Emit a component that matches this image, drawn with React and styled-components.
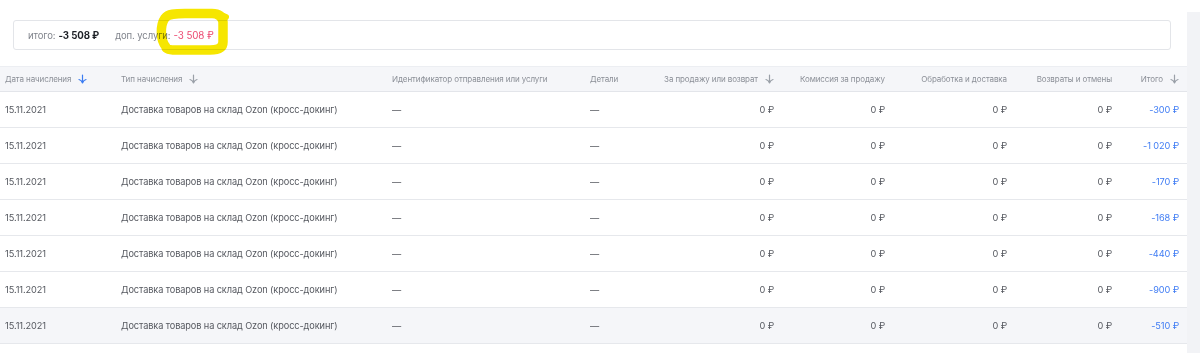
import React from "react";
import styled, { createGlobalStyle } from "styled-components";

const GlobalStyle = createGlobalStyle`
  html, body {
    margin: 0;
    padding: 0;
    background: #fff;
    font-family: Inter, "Noto Sans", sans-serif;
  }
`;

const Page = styled.div`
  display: flex;
  width: 1200px;
  height: 353px;
  overflow: hidden;
`;

const Main = styled.div`
  width: 1187px;
  flex: none;
  padding-top: 20px;
  position: relative;
`;

const Side = styled.div`
  flex: 1;
  margin-top: 12px;
  background: #f2f3f6;
`;

const Summary = styled.div`
  margin: 0 16px 0 13px;
  height: 30px;
  box-sizing: border-box;
  border: 1px solid #e3e5e9;
  border-radius: 3px;
  display: flex;
  align-items: center;
  gap: 16px;
  padding-left: 14px;
  font-size: 9.5px;
  letter-spacing: -0.1px;
`;

const SumItem = styled.span`
  color: #80848c;
  display: flex;
  gap: 3px;
  align-items: baseline;
`;

const SumValue = styled.span`
  font-size: ${({ $bold }) => ($bold ? "9.7px" : "9.8px")};
  font-weight: ${({ $bold }) => ($bold ? 700 : 400)};
  color: ${({ $tone }) => ($tone === "red" ? "#ec4870" : "#1d2026")};
`;

// highlighter scribble drawn over the summary; multiply keeps the text readable
const Mark = styled.svg`
  position: absolute;
  left: 0;
  top: 0;
  pointer-events: none;
  mix-blend-mode: multiply;
`;

const cols = "116px 271px 198px 65px 132px 111px 122px 105px 67px";

const Table = styled.div`
  margin-top: 16px;
`;

const HeadRow = styled.div`
  display: grid;
  grid-template-columns: ${cols};
  height: 26px;
  background: #f5f6f9;
  border-top: 1px solid #eceef2;
  border-bottom: 1px solid #e3e5ea;
  box-sizing: border-box;
`;

const Row = styled.div`
  display: grid;
  grid-template-columns: ${cols};
  height: 36px;
  background: ${({ $hover }) => ($hover ? "#f5f6f9" : "#fff")};
  border-bottom: 1px solid #e6e8ec;
  box-sizing: border-box;
`;

const Th = styled.div`
  display: flex;
  align-items: center;
  justify-content: ${({ $right }) => ($right ? "flex-end" : "flex-start")};
  gap: 7px;
  padding: ${({ $right }) => ($right ? "0 8px 0 0" : "0 0 0 5px")};
  font-size: 8px;
  letter-spacing: -0.1px;
  color: #8b8f97;
  white-space: nowrap;
`;

const Td = styled.div`
  display: flex;
  align-items: center;
  justify-content: ${({ $right }) => ($right ? "flex-end" : "flex-start")};
  padding: ${({ $right }) => ($right ? "0 8px 0 0" : "0 0 0 5px")};
  font-size: 9.2px;
  letter-spacing: -0.1px;
  color: ${({ $blue }) => ($blue ? "#3f7cf4" : "#55585f")};
  white-space: nowrap;
`;

const Arrow = ({ active }) => (
  <svg width="9" height="10" viewBox="0 0 9 10" fill="none">
    <path
      d="M4.5 1v8M1 5.5c1.6.4 2.8 1.7 3.5 3.5M8 5.5c-1.6.4-2.8 1.7-3.5 3.5"
      stroke={active ? "#3b7cf2" : "#9aa0a8"}
      strokeWidth="1.2"
      strokeLinecap="round"
    />
  </svg>
);

const headers = [
  { label: "Дата начисления", arrow: "active" },
  { label: "Тип начисления", arrow: "gray" },
  { label: "Идентификатор отправления или услуги" },
  { label: "Детали" },
  { label: "За продажу или возврат", arrow: "gray", right: true },
  { label: "Комиссия за продажу", right: true },
  { label: "Обработка и доставка", right: true },
  { label: "Возвраты и отмены", right: true },
  { label: "Итого", arrow: "gray", right: true },
];

const totals = ["-300", "-1 020", "-170", "-168", "-440", "-900", "-510"];

export default function App() {
  return (
    <Page>
      <GlobalStyle />
      <Main>
        <Summary>
          <SumItem>
            итого:<SumValue $bold>-3 508 ₽</SumValue>
          </SumItem>
          <SumItem>
            доп. услуги:<SumValue $tone="red">-3 508 ₽</SumValue>
          </SumItem>
        </Summary>
        <Mark width="240" height="60" viewBox="0 0 240 60">
          <path
            d="M166 47C160 40 160 25 165 18C168 14 175 13.5 185 13.5L212 13.5C218 13.5 222 16 223 22L223 42C223 48 218 50 210 50L176 50C169 50 166 49 166 47Z"
            stroke="#f6e600"
            strokeWidth="9.5"
            strokeLinejoin="round"
            fill="none"
          />
          <path d="M219 14L226 17" stroke="#f6e600" strokeWidth="6" strokeLinecap="round" />
        </Mark>
        <Table>
          <HeadRow>
            {headers.map((h) => (
              <Th key={h.label} $right={h.right}>
                {h.label}
                {h.arrow && <Arrow active={h.arrow === "active"} />}
              </Th>
            ))}
          </HeadRow>
          {totals.map((t, i) => (
            <Row key={i} $hover={i === totals.length - 1}>
              <Td>15.11.2021</Td>
              <Td>Доставка товаров на склад Ozon (кросс-докинг)</Td>
              <Td>—</Td>
              <Td>—</Td>
              <Td $right>0 ₽</Td>
              <Td $right>0 ₽</Td>
              <Td $right>0 ₽</Td>
              <Td $right>0 ₽</Td>
              <Td $right $blue>{t} ₽</Td>
            </Row>
          ))}
        </Table>
      </Main>
      <Side />
    </Page>
  );
}
